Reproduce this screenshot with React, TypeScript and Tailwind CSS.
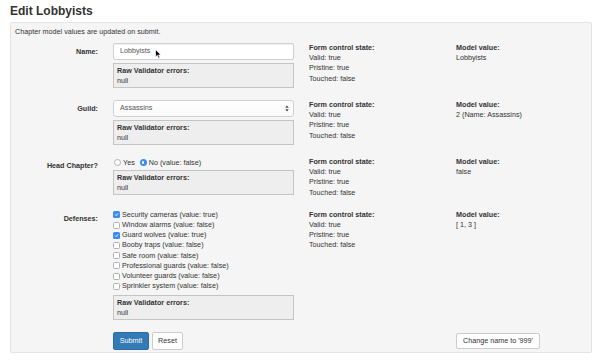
const font = { fontFamily: '"Liberation Sans", Arial, sans-serif' }

function Validator() {
  return (
    <div className="h-[25px] border border-[#c4c4c4] bg-[#eeeeee] px-[3px] pt-[2px] leading-[10px]">
      <div className="font-bold">Raw Validator errors:</div>
      <div>null</div>
    </div>
  )
}

function State({ model }: { model: string }) {
  return (
    <>
      <div className="ml-[15px] w-[147px] leading-[10.2px]">
        <div className="font-bold">Form control state:</div>
        <div>Valid: true</div>
        <div>Pristine: true</div>
        <div>Touched: false</div>
      </div>
      <div className="flex-1 leading-[10.2px]">
        <div className="font-bold">Model value:</div>
        <div>{model}</div>
      </div>
    </>
  )
}

function Label({ text }: { text: string }) {
  return <div className="mr-[15px] w-[83px] pt-[4px] text-right font-bold leading-[10px]">{text}</div>
}

function Checkbox({ checked }: { checked: boolean }) {
  return checked ? (
    <span className="mr-[2px] inline-flex h-[7px] w-[7px] items-center justify-center rounded-[1.5px] bg-[#3b8cf0]">
      <svg width="5" height="5" viewBox="0 0 10 10">
        <path d="M2 5.2 L4.2 7.4 L8.2 2.6" fill="none" stroke="white" strokeWidth="1.8" />
      </svg>
    </span>
  ) : (
    <span className="mr-[2px] inline-block h-[7px] w-[7px] rounded-[1.5px] border border-[#b0b0b0] bg-white" />
  )
}

const defenses = [
  ['Security cameras', true],
  ['Window alarms', false],
  ['Guard wolves', true],
  ['Booby traps', false],
  ['Safe room', false],
  ['Professional guards', false],
  ['Volunteer guards', false],
  ['Sprinkler system', false],
] as const

export default function App() {
  return (
    <div className="h-[361px] w-[600px] overflow-hidden bg-white text-[7.2px] text-[#333]" style={font}>
      <h3 className="pl-[10px] pt-[3px] text-[12px] font-bold leading-[16px] text-[#333]">Edit Lobbyists</h3>
      <div className="ml-[10px] mt-[3px] h-[331px] w-[582px] rounded-[2px] border border-[#e3e3e3] bg-[#f5f5f5] px-[4px] pt-[4px]">
        <p className="leading-[10px]">Chapter model values are updated on submit.</p>

        <div className="mt-[6px] flex items-start">
          <Label text="Name:" />
          <div className="w-[181px]">
            <div className="relative flex h-[17px] items-center rounded-[2px] border border-[#d0d0d0] bg-white pl-[6px] text-[#555] shadow-[inset_0_1px_1px_rgba(0,0,0,0.06)]">
              Lobbyists
              <svg className="absolute left-[41px] top-[5px]" width="7" height="10" viewBox="0 0 7 10">
                <path d="M0.5 0.5 L0.5 8 L2.3 6.3 L3.6 9.3 L4.8 8.8 L3.6 5.9 L6 5.9 Z" fill="black" stroke="white" strokeWidth="0.7" />
              </svg>
            </div>
            <div className="mt-[3px]">
              <Validator />
            </div>
          </div>
          <State model="Lobbyists" />
        </div>

        <div className="mt-[12px] flex items-start">
          <Label text="Guild:" />
          <div className="w-[181px]">
            <div className="flex h-[17px] items-center justify-between rounded-[3px] border border-[#d0d0d0] bg-gradient-to-b from-white to-[#fafafa] pl-[6px] pr-[4px] text-[#555]">
              Assassins
              <svg width="4" height="7" viewBox="0 0 4 7">
                <path d="M0.3 2.8 L2 0.5 L3.7 2.8 Z M0.3 4.2 L2 6.5 L3.7 4.2 Z" fill="#444" />
              </svg>
            </div>
            <div className="mt-[3px]">
              <Validator />
            </div>
          </div>
          <State model="2 (Name: Assassins)" />
        </div>

        <div className="mt-[12px] flex items-start">
          <Label text="Head Chapter?" />
          <div className="w-[181px]">
            <div className="flex h-[11px] items-center pl-[1px] leading-[10px]">
              <span className="mr-[2px] inline-block h-[7px] w-[7px] rounded-full border border-[#b0b0b0] bg-white" />
              <span>Yes</span>
              <span className="ml-[5px] mr-[2px] inline-flex h-[7px] w-[7px] items-center justify-center rounded-full bg-[#3b8cf0]">
                <span className="h-[2.5px] w-[2.5px] rounded-full bg-white" />
              </span>
              <span>No (value: false)</span>
            </div>
            <div className="mt-[2px]">
              <Validator />
            </div>
          </div>
          <State model="false" />
        </div>

        <div className="mt-[12px] flex items-start">
          <Label text="Defenses:" />
          <div className="w-[181px]">
            <div className="leading-[10.2px]">
              {defenses.map(([name, on]) => (
                <div key={name} className="flex h-[10.2px] items-center">
                  <Checkbox checked={on} />
                  <span>
                    {name} (value: {on ? 'true' : 'false'})
                  </span>
                </div>
              ))}
            </div>
            <div className="mt-[4px]">
              <Validator />
            </div>
          </div>
          <State model="[ 1, 3 ]" />
        </div>

        <div className="mt-[11px] flex items-start">
          <div className="mr-[15px] w-[83px]" />
          <div className="flex w-[181px] gap-[3px] pt-[1px]">
            <button className="h-[18px] w-[36px] rounded-[2px] border border-[#2e6da4] bg-[#337ab7] text-white">Submit</button>
            <button className="h-[18px] w-[31px] rounded-[2px] border border-[#ccc] bg-white text-[#333]">Reset</button>
          </div>
          <div className="ml-[15px] w-[147px]" />
          <div className="flex-1 pt-[2px]">
            <button className="h-[16px] w-[84px] rounded-[2px] border border-[#ccc] bg-white text-[#333]">Change name to '999'</button>
          </div>
        </div>
      </div>
    </div>
  )
}
